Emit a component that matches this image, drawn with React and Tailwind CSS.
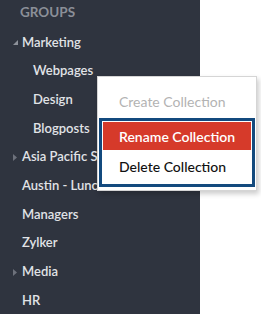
import React from 'react';

const groups = [
  { name: 'Marketing', level: 0, caret: 'open' },
  { name: 'Webpages', level: 1 },
  { name: 'Design', level: 1 },
  { name: 'Blogposts', level: 1 },
  { name: 'Asia Pacific Sales', level: 0, caret: 'closed' },
  { name: 'Austin - Lunch Meet', level: 0 },
  { name: 'Managers', level: 0 },
  { name: 'Zylker', level: 0 },
  { name: 'Media', level: 0, caret: 'closed' },
  { name: 'HR', level: 0 },
];

const Caret = ({ type }) => {
  if (type === 'open') {
    return (
      <svg className="absolute left-[13px] top-[12px]" width="5" height="5" viewBox="0 0 5 5">
        <path d="M5 0 L5 5 L0 5 Z" fill="#8d919a" />
      </svg>
    );
  }
  return (
    <svg className="absolute left-[13px] top-[11px]" width="4" height="7" viewBox="0 0 4 7">
      <path d="M0 0 L4 3.5 L0 7 Z" fill="#6d717b" />
    </svg>
  );
};

const App = () => {
  return (
    <div
      className="relative w-[261px] h-[314px] bg-white overflow-hidden"
      style={{ fontFamily: 'Lato, "Open Sans", sans-serif' }}
    >
      {/* sidebar */}
      <div className="w-[200px] h-full bg-[#2f343f] overflow-hidden">
        <div className="h-6 flex items-center pl-[20px] text-[13.5px] font-bold text-[#8b8f98]">
          GROUPS
        </div>
        <div className="mt-1">
          {groups.map((g) => (
            <div
              key={g.name}
              className={`relative h-[28.7px] flex items-center whitespace-nowrap text-[13px] font-semibold text-[#e1e3e7] ${g.level ? 'pl-[33px]' : 'pl-[22px]'}`}
            >
              {g.caret && <Caret type={g.caret} />}
              {g.name}
            </div>
          ))}
        </div>
      </div>

      {/* context menu */}
      <div className="absolute left-[97px] top-[76px] w-[160px] bg-white border border-[#d5d5d5] shadow-[2px_3px_5px_rgba(0,0,0,0.2)] text-[14px]">
        <div className="h-[41px] pt-[8px] flex items-center pl-[21px] text-[#b3b3b3]">
          Create Collection
        </div>
        <div className="mx-[1px] mb-[3px] border-[3px] border-[#134a7e] p-px">
          <div className="h-[28px] flex items-center pl-[16px] bg-[#d63a2a] text-white font-semibold">
            Rename Collection
          </div>
          <div className="h-[33px] flex items-center pl-[16px] text-[#111] font-medium">
            Delete Collection
          </div>
        </div>
      </div>
    </div>
  );
};

export default App;
